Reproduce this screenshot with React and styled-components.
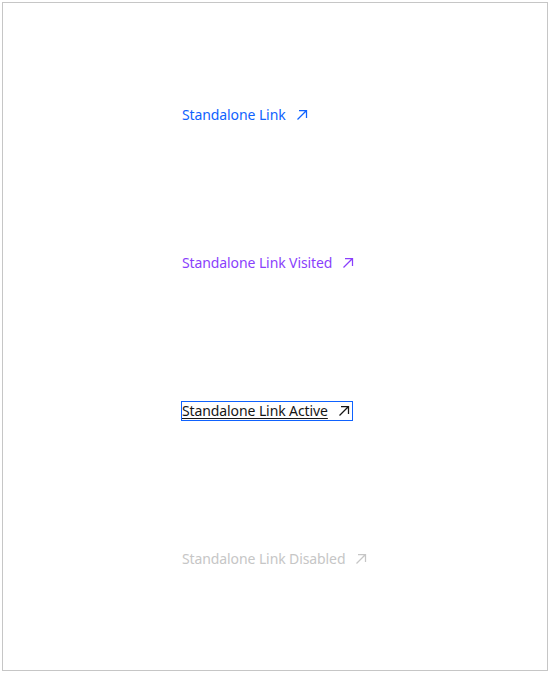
import React from 'react';
import styled, { createGlobalStyle } from 'styled-components';

const Global = createGlobalStyle`
  html, body { margin: 0; padding: 0; background: #fff; }
  body { font-family: "Noto Sans", "DejaVu Sans", sans-serif; }
`;

const Frame = styled.div`
  margin: 2px;
  width: 546px;
  height: 669px;
  border: 1px solid #c6c6c6;
  display: grid;
  grid-template-rows: repeat(4, 148px);
  align-items: center;
  padding: 38px 0 0 179px;
  box-sizing: border-box;
`;

const colors = {
  normal: '#0f62fe',
  visited: '#8a3ffc',
  active: '#161616',
  disabled: '#c6c6c6',
};

const Link = styled.a`
  justify-self: start;
  display: inline-flex;
  align-items: center;
  gap: 8px;
  height: 18px;
  font-size: 14px;
  line-height: 18px;
  letter-spacing: -0.1px;
  color: ${p => colors[p.$state]};
  text-decoration: none;
  cursor: ${p => (p.$state === 'disabled' ? 'not-allowed' : 'pointer')};
  outline: ${p => (p.$state === 'active' ? '1px solid #0f62fe' : 'none')};

  .label {
    text-decoration: ${p => (p.$state === 'active' ? 'underline' : 'none')};
    text-underline-offset: 2px;
  }
`;

const ArrowUpRight = () => (
  <svg width="16" height="16" viewBox="0 0 16 16" fill="none" stroke="currentColor"
    strokeWidth="1.25" aria-hidden="true">
    <path d="M5 3.5H12.5V11M12.5 3.5L3.5 12.5" />
  </svg>
);

const links = [
  { label: 'Standalone Link', state: 'normal' },
  { label: 'Standalone Link Visited', state: 'visited' },
  { label: 'Standalone Link Active', state: 'active' },
  { label: 'Standalone Link Disabled', state: 'disabled' },
];

export default function App() {
  return (
    <>
      <Global />
      <Frame>
        {links.map(l => (
          <Link key={l.label} href="#" $state={l.state} onClick={e => e.preventDefault()}>
            <span className="label">{l.label}</span>
            <ArrowUpRight />
          </Link>
        ))}
      </Frame>
    </>
  );
}
